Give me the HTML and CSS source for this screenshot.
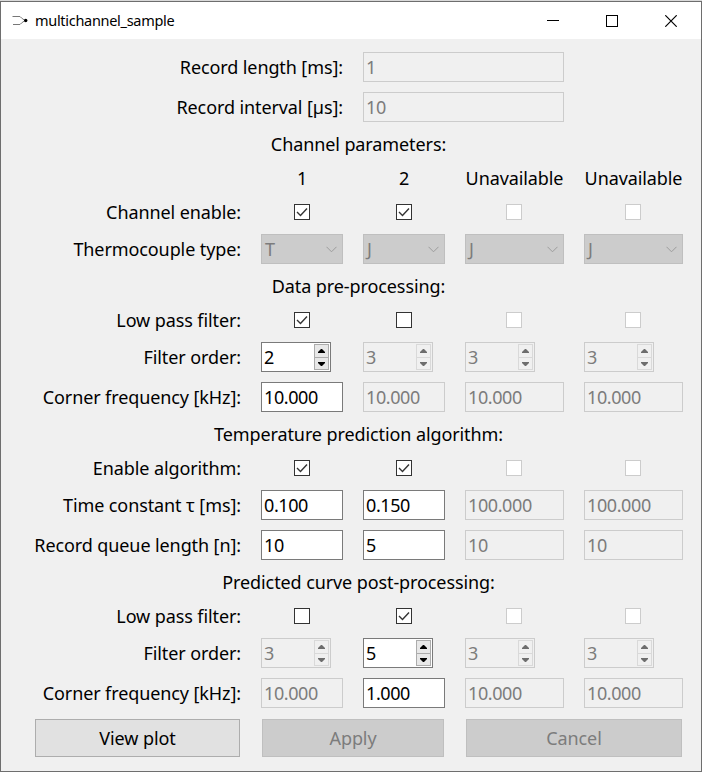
FILE: index.html
```
<!DOCTYPE html>
<html lang="en">
<head>
<meta charset="utf-8">
<title>multichannel_sample</title>
<link rel="stylesheet" href="styles.css">
</head>
<body>
<div class="window">
  <header class="titlebar">
    <svg class="app-icon" width="16" height="16" viewBox="0 0 16 16"><path d="M.5 3.5H8L9.5 5L13 7.5L9.5 10L8 11.5H1" fill="none" stroke="#777"/><circle cx="13.7" cy="7.5" r="1.7"/></svg>
    <span class="caption">multichannel_sample</span>
    <div class="controls">
      <svg width="12" height="12"><path d="M0 5.5H12" stroke="#000"/></svg>
      <svg width="12" height="12"><rect x=".5" y=".5" width="11" height="11" fill="none" stroke="#000"/></svg>
      <svg width="12" height="12"><path d="M.3 .3L11.7 11.7M11.7 .3L.3 11.7" stroke="#000" stroke-width="1.2"/></svg>
    </div>
  </header>
  <main class="form" id="form"></main>
</div>
<script src="script.js"></script>
</body>
</html>
```
FILE: styles.css
```
* { box-sizing: border-box; }
body { margin: 0; background: #d9d9d9; font: 18px/24px "Noto Sans", sans-serif; color: #000; }
.window { height: 771px; margin-top: 1px; border: 1px solid #6e6e6e; background: #f0f0f0; }
.titlebar { height: 37px; padding: 0 24px 0 11px; display: flex; align-items: center; background: #fff; }
.app-icon { margin-right: 7px; }
.caption { font-size: 14.5px; letter-spacing: -.3px; line-height: 20px; margin-top: -2px; }
.controls { margin-left: auto; display: flex; gap: 47px; }
.controls svg { display: block; }
.form {
  display: grid;
  grid-template-columns: 207px 82px 82px 99px 99px;
  gap: 10px 20px;
  padding: 13px 0 0 33px;
  letter-spacing: -.1px;
  white-space: nowrap;
}
.label { text-align: right; align-self: center; }
.span2 { grid-column: span 2; }
.heading { grid-column: 1 / -1; text-align: center; height: 24px; line-height: 24px; }
.column-name { text-align: center; height: 24px; line-height: 24px; }
.check { justify-self: center; align-self: center; width: 16px; height: 16px; border: 1px solid #333; background: #fff; }
.check svg { display: block; }
.check.off { border-color: #ccc; margin-right: 1px; }
.field { height: 30px; border: 1px solid #7a7a7a; background: #fff; padding: 0 2px; line-height: 29px; letter-spacing: -.4px; }
.field.off { border-color: #ccc; background: #f0f0f0; color: #7c7c7c; }
.combo { height: 30px; border: 1px solid #bfbfbf; background: #ccc; color: #7c7c7c; padding: 0 5px 0 3px; line-height: 29px; display: flex; align-items: center; justify-content: space-between; }
.spin { width: 70px; display: flex; justify-content: space-between; padding-right: 1px; }
.arrows { width: 15px; height: 26px; margin-top: 1px; border: 1px solid #acacac; background: #e8e8e8; display: grid; grid-template-rows: 12px 12px; }
.arrows svg { display: block; }
.arrows svg + svg { border-top: 1px solid #acacac; }
.off .arrows { border-color: #d9d9d9; background: #f0f0f0; }
.off .arrows svg + svg { border-color: #d9d9d9; }
.button { height: 38px; margin: 1px; border: 1px solid #adadad; background: #e1e1e1; text-align: center; line-height: 37px; }
.button.off { border-color: #bfbfbf; background: #ccc; color: #7c7c7c; }
```
FILE: script.js
```
const tick = '<svg width="14" height="14"><path d="M2 7L5.5 10.5L12 3.5" fill="none" stroke="#333" stroke-width="1.4"/></svg>';
const chevron = '<svg width="11" height="7"><path d="M.5 .8L5.5 5.8L10.5 .8" fill="none" stroke="#9c9c9c"/></svg>';
const arrows = c => `<span class="arrows"><svg width="13" height="12"><path d="M3 8V7L6 4H7L10 7V8Z" fill="${c}"/></svg><svg width="13" height="13"><path d="M3 4V5L6 8H7L10 5V4Z" fill="${c}"/></svg></span>`;
const label = t => `<div class="label">${t}</div>`;
const heading = t => `<div class="heading">${t}</div>`;
const off = on => on ? '' : ' off';
// Channels 3 and 4 are unavailable, so their checkboxes are always disabled.
const checks = (t, a, b) => label(t) + [a, b].map(v => `<div class="check">${v ? tick : ''}</div>`).join('') + '<div class="check off"></div>'.repeat(2);
const fields = (t, cells) => label(t) + cells.map(([v, on]) => `<div class="field${off(on)}">${v}</div>`).join('');
const spins = (t, cells) => label(t) + cells.map(([v, on]) => `<div class="field spin${off(on)}">${v}${arrows(on ? '#000' : '#6d6d6d')}</div>`).join('');
const wide = (t, v) => `<div class="label span2">${t}</div><div class="field off span2">${v}</div><div></div>`;

document.getElementById('form').innerHTML = [
  wide('Record length [ms]:', '1'),
  wide('Record interval [µs]:', '10'),
  heading('Channel parameters:'),
  '<div></div>' + ['1', '2', 'Unavailable', 'Unavailable'].map(t => `<div class="column-name">${t}</div>`).join(''),
  checks('Channel enable:', 1, 1),
  label('Thermocouple type:') + ['T', 'J', 'J', 'J'].map(t => `<div class="combo">${t}${chevron}</div>`).join(''),
  heading('Data pre-processing:'),
  checks('Low pass filter:', 1, 0),
  spins('Filter order:', [['2', 1], ['3', 0], ['3', 0], ['3', 0]]),
  fields('Corner frequency [kHz]:', [['10.000', 1], ['10.000', 0], ['10.000', 0], ['10.000', 0]]),
  heading('Temperature prediction algorithm:'),
  checks('Enable algorithm:', 1, 1),
  fields('Time constant τ [ms]:', [['0.100', 1], ['0.150', 1], ['100.000', 0], ['100.000', 0]]),
  fields('Record queue length [n]:', [['10', 1], ['5', 1], ['10', 0], ['10', 0]]),
  heading('Predicted curve post-processing:'),
  checks('Low pass filter:', 0, 1),
  spins('Filter order:', [['3', 0], ['5', 1], ['3', 0], ['3', 0]]),
  fields('Corner frequency [kHz]:', [['10.000', 0], ['1.000', 1], ['10.000', 0], ['10.000', 0]]),
  '<div class="button">View plot</div><div class="button off span2">Apply</div><div class="button off span2">Cancel</div>'
].join('');
```
